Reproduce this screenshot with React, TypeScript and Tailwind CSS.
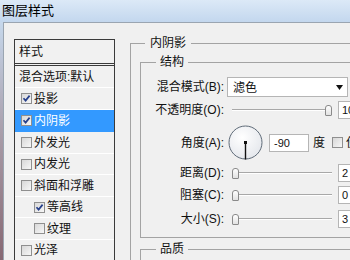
import React from 'react';

const font = 'font-["Liberation_Sans","Noto_Sans_CJK_SC",sans-serif]';

const Check: React.FC<{ on?: boolean }> = ({ on }) => (
  <span className="w-[11px] h-[11px] shrink-0 border border-[#8f8f8f] bg-gradient-to-br from-[#d8d8d8] to-[#f7f7f7] flex items-center justify-center">
    {on && (
      <svg width="9" height="9" viewBox="0 0 9 9">
        <path d="M1.5 4.2 L3.6 6.6 L7.6 1.6" stroke="#27408b" strokeWidth="1.7" fill="none" />
      </svg>
    )}
  </span>
);

const rows = [
  { label: '混合选项:默认', h: 'h-[22px]', box: false, level: 0 },
  { label: '投影', h: 'h-[22px]', box: true, on: true, level: 1 },
  { label: '内阴影', h: 'h-[22px]', box: true, on: true, level: 1, active: true },
  { label: '外发光', h: 'h-[22px]', box: true, level: 1 },
  { label: '内发光', h: 'h-[21px]', box: true, level: 1 },
  { label: '斜面和浮雕', h: 'h-[22px]', box: true, level: 1 },
  { label: '等高线', h: 'h-[21px]', box: true, on: true, level: 2 },
  { label: '纹理', h: 'h-[22px]', box: true, level: 2 },
  { label: '光泽', h: 'h-[21px]', box: true, level: 1 },
];

const Thumb = () => (
  <span className="w-[7px] h-[11px] shrink-0 rounded-t-[3px] rounded-b-[1px] border border-[#8a8a8a] bg-gradient-to-b from-white to-[#e2e2e2]" />
);

const Slider: React.FC<{ at: 'start' | 'end' }> = ({ at }) => (
  <div className="w-[100px] ml-[8px] shrink-0 flex items-center">
    {at === 'start' && <Thumb />}
    <div className="flex-1 h-[2px] border-t border-[#a8a8a8] border-b border-b-white" />
    {at === 'end' && <Thumb />}
  </div>
);

const ValueBox: React.FC<{ v: string }> = ({ v }) => (
  <div className="ml-[6px] w-[40px] h-[18px] shrink-0 bg-white border border-[#b5b5b5] pl-[3px] text-[11px] leading-[16px]">{v}</div>
);

const Label: React.FC<{ children: React.ReactNode }> = ({ children }) => (
  <div className="w-[83px] shrink-0 text-right whitespace-nowrap">{children}</div>
);

const App: React.FC = () => {
  return (
    <div className={`w-[350px] h-[260px] overflow-hidden bg-[#f0f0f0] flex flex-col text-[12px] text-[#111] ${font}`}>
      {/* title bar */}
      <div className="h-[22px] shrink-0 bg-gradient-to-b from-[#dce9f7] to-[#c3d7ee] pl-[2px] pt-[2px] text-[13px] leading-[17px] text-black">
        图层样式
      </div>

      <div className="flex flex-1 min-h-0">
        <div className="w-[3px] shrink-0 bg-gradient-to-b from-[#c6d8ec] via-[#a79aa6] to-[#866873]" />

        <div className="flex flex-1 min-w-0 border-l border-t border-[#9aa5b1] bg-[#f0f0f0]">
          {/* style list */}
          <div className="pl-[10px] pt-[16px] shrink-0">
            <div className="w-[101px] border border-[#3a3a3a] border-b-0 bg-[#f1f1f1]">
              <div className="h-[23px] pl-[4px] flex items-center">样式</div>
              <div className="h-[3px] border-t border-b border-[#3a3a3a]" />
              {rows.map(r => (
                <div
                  key={r.label}
                  className={`${r.h} flex items-center border-b whitespace-nowrap ${
                    r.active ? 'bg-[#3399ff] text-white border-[#3399ff]' : 'border-white'
                  } ${r.level === 0 ? 'pl-[4px]' : r.level === 1 ? 'pl-[6px]' : 'pl-[19px]'}`}
                >
                  {r.box && <Check on={r.on} />}
                  <span className={r.box ? 'ml-[2px]' : ''}>{r.label}</span>
                </div>
              ))}
            </div>
          </div>

          {/* settings */}
          <div className="ml-[15px] mt-[13px] w-[300px] shrink-0">
            <fieldset className="border border-[#a3a3a3] min-w-0 h-[260px]">
              <legend className="ml-[14px] px-[5px] leading-[14px]">内阴影</legend>

              <fieldset className="ml-[9px] mt-[5px] border border-[#a3a3a3] min-w-0 pb-[9px]">
                <legend className="ml-[15px] px-[4px] leading-[14px]">结构</legend>

                <div className="mt-[8px] h-[20px] flex items-center">
                  <Label>混合模式(B):</Label>
                  <div className="ml-[3px] w-[121px] h-[20px] shrink-0 bg-white border border-[#b5b5b5] flex items-center pl-[5px] pr-[4px] pt-[2px]">
                    <span className="flex-1">滤色</span>
                    <svg width="7" height="5" viewBox="0 0 7 5" className="mb-[2px]">
                      <path d="M0 0 H7 L3.5 5 Z" fill="#111" />
                    </svg>
                  </div>
                </div>

                <div className="mt-[4px] h-[18px] flex items-center">
                  <Label>不透明度(O):</Label>
                  <Slider at="end" />
                  <ValueBox v="100" />
                </div>

                <div className="mt-[6px] h-[35px] flex items-center">
                  <Label>角度(A):</Label>
                  <svg width="35" height="35" viewBox="0 0 35 35" className="ml-[4px] shrink-0">
                    <defs>
                      <radialGradient id="dial" cx="40%" cy="35%" r="70%">
                        <stop offset="0%" stopColor="#ffffff" />
                        <stop offset="100%" stopColor="#e4e7ec" />
                      </radialGradient>
                    </defs>
                    <circle cx="17.5" cy="17.5" r="16.5" fill="url(#dial)" stroke="#5f6b78" strokeWidth="1" />
                    <line x1="17.5" y1="17.5" x2="17.5" y2="34.5" stroke="#111" strokeWidth="1.4" />
                    <rect x="16" y="16" width="3" height="3" fill="#111" />
                  </svg>
                  <div className="ml-[6px] w-[40px] h-[18px] shrink-0 bg-white border border-[#b5b5b5] pl-[4px] text-[11px] leading-[16px]">-90</div>
                  <span className="ml-[4px] shrink-0">度</span>
                  <span className="ml-[7px] flex items-center whitespace-nowrap shrink-0">
                    <Check />
                    <span className="ml-[3px]">使用全局光(G)</span>
                  </span>
                </div>

                <div className="mt-[4px] h-[18px] flex items-center">
                  <Label>距离(D):</Label>
                  <Slider at="start" />
                  <ValueBox v="2" />
                </div>

                <div className="mt-[4px] h-[18px] flex items-center">
                  <Label>阻塞(C):</Label>
                  <Slider at="start" />
                  <ValueBox v="0" />
                </div>

                <div className="mt-[6px] h-[18px] flex items-center">
                  <Label>大小(S):</Label>
                  <Slider at="start" />
                  <ValueBox v="3" />
                </div>
              </fieldset>

              <fieldset className="ml-[9px] mt-[4px] border border-[#a3a3a3] min-w-0 h-[60px]">
                <legend className="ml-[15px] px-[4px] leading-[14px]">品质</legend>
              </fieldset>
            </fieldset>
          </div>
        </div>
      </div>
    </div>
  );
};

export default App;
